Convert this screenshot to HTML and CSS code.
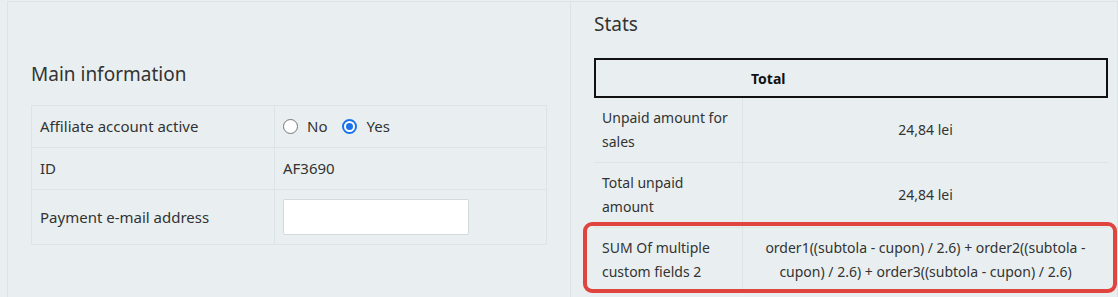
FILE: index.html
```html
<!DOCTYPE html>
<html>
<head>
<meta charset="utf-8">
<link rel="stylesheet" href="styles.css">
</head>
<body>
<div class="page">
  <section class="col col-left">
    <h2 class="heading main-heading">Main information</h2>
    <div class="info-table">
      <div class="info-row">
        <div class="cell label">Affiliate account active</div>
        <div class="cell value">
          <label class="radio"><span class="dot"></span>No</label>
          <label class="radio"><span class="dot checked"></span>Yes</label>
        </div>
      </div>
      <div class="info-row">
        <div class="cell label">ID</div>
        <div class="cell value">AF3690</div>
      </div>
      <div class="info-row tall">
        <div class="cell label">Payment e-mail address</div>
        <div class="cell value"><input class="email" type="text"></div>
      </div>
    </div>
  </section>
  <section class="col col-right">
    <h2 class="heading stats-heading">Stats</h2>
    <div class="total-head"><span>Total</span></div>
    <div class="stats-table">
      <div class="stats-row">
        <div class="scell slabel">Unpaid amount for sales</div>
        <div class="scell svalue">24,84 lei</div>
      </div>
      <div class="stats-row">
        <div class="scell slabel">Total unpaid amount</div>
        <div class="scell svalue">24,84 lei</div>
      </div>
      <div class="stats-row highlighted">
        <div class="scell slabel">SUM Of multiple custom fields 2</div>
        <div class="scell svalue">order1((subtola - cupon) / 2.6) + order2((subtola - cupon) / 2.6) + order3((subtola - cupon) / 2.6)</div>
      </div>
    </div>
  </section>
</div>
</body>
</html>
```

FILE: styles.css
```css
* { box-sizing: border-box; }
html, body { margin: 0; padding: 0; }
body {
  background: #e9eff0;
  font-family: "Noto Sans", sans-serif;
  color: #333;
  font-size: 14px;
  width: 1118px;
  height: 297px;
  overflow: hidden;
}
.page {
  display: flex;
  margin-left: 7px;
  padding-top: 1px;
  height: 297px;
}
.col {
  border-top: 1px solid #dde4e5;
  border-left: 1px solid #dde4e5;
}
.col-left {
  width: 563px;
  padding: 0 23px 0 23px;
}
.col-right {
  flex: 1;
  border-right: 1px solid #dde4e5;
  padding: 0 9px 0 23px;
}
.heading {
  font-weight: 400;
  margin: 0;
  color: #333;
  font-size: 19px;
  line-height: 24px;
}
.main-heading { margin-top: 60px; margin-bottom: 19px; }
.stats-heading { margin-top: 10px; margin-bottom: 22px; }

.info-table {
  border: 1px solid #dde4e5;
  font-size: 15px;
}
.info-row {
  display: grid;
  grid-template-columns: 243px 1fr;
  border-bottom: 1px solid #dde4e5;
}
.info-row:last-child { border-bottom: 0; }
.cell {
  padding: 9px 8px;
  line-height: 23px;
  display: flex;
  align-items: center;
}
.label { border-right: 1px solid #dde4e5; }
.radio {
  display: inline-flex;
  align-items: center;
  margin-right: 15px;
}
.dot {
  width: 15px;
  height: 15px;
  border-radius: 50%;
  border: 1px solid #767676;
  background: #fff;
  margin-right: 9px;
  position: relative;
}
.dot.checked {
  border: 2px solid #1a73e8;
}
.dot.checked::after {
  content: "";
  position: absolute;
  left: 2px; top: 2px;
  width: 7px; height: 7px;
  border-radius: 50%;
  background: #1a73e8;
}
.email {
  width: 186px;
  height: 36px;
  border: 1px solid #d4d9da;
  border-radius: 2px;
  background: #fff;
  margin: 0;
}

.total-head {
  height: 40px;
  border: 2px solid #111;
  display: flex;
  align-items: center;
  padding-left: 155px;
  font-weight: 700;
  color: #111;
}
.stats-row {
  display: grid;
  grid-template-columns: 149px 1fr;
  border-bottom: 1px solid #dde4e5;
  position: relative;
}
.stats-row:last-child { border-bottom: 0; }
.scell {
  padding: 8px 8px;
  line-height: 24px;
}
.slabel { border-right: 1px solid #dde4e5; }
.svalue {
  display: flex;
  align-items: center;
  justify-content: center;
  text-align: center;
  padding: 8px 14px;
}
.highlighted::after {
  content: "";
  position: absolute;
  left: -11px;
  right: -9px;
  top: -6px;
  bottom: -1px;
  border: 4px solid #e0443e;
  border-radius: 9px;
  pointer-events: none;
}
```
